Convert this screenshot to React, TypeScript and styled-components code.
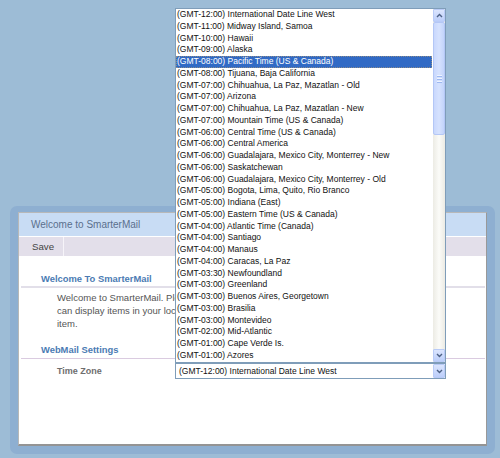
import styled, { createGlobalStyle } from 'styled-components';

const zones = [
  '(GMT-12:00) International Date Line West',
  '(GMT-11:00) Midway Island, Samoa',
  '(GMT-10:00) Hawaii',
  '(GMT-09:00) Alaska',
  '(GMT-08:00) Pacific Time (US & Canada)',
  '(GMT-08:00) Tijuana, Baja California',
  '(GMT-07:00) Chihuahua, La Paz, Mazatlan - Old',
  '(GMT-07:00) Arizona',
  '(GMT-07:00) Chihuahua, La Paz, Mazatlan - New',
  '(GMT-07:00) Mountain Time (US & Canada)',
  '(GMT-06:00) Central Time (US & Canada)',
  '(GMT-06:00) Central America',
  '(GMT-06:00) Guadalajara, Mexico City, Monterrey - New',
  '(GMT-06:00) Saskatchewan',
  '(GMT-06:00) Guadalajara, Mexico City, Monterrey - Old',
  '(GMT-05:00) Bogota, Lima, Quito, Rio Branco',
  '(GMT-05:00) Indiana (East)',
  '(GMT-05:00) Eastern Time (US & Canada)',
  '(GMT-04:00) Atlantic Time (Canada)',
  '(GMT-04:00) Santiago',
  '(GMT-04:00) Manaus',
  '(GMT-04:00) Caracas, La Paz',
  '(GMT-03:30) Newfoundland',
  '(GMT-03:00) Greenland',
  '(GMT-03:00) Buenos Aires, Georgetown',
  '(GMT-03:00) Brasilia',
  '(GMT-03:00) Montevideo',
  '(GMT-02:00) Mid-Atlantic',
  '(GMT-01:00) Cape Verde Is.',
  '(GMT-01:00) Azores',
];

const GlobalStyle = createGlobalStyle`
  html, body {
    margin: 0;
    padding: 0;
    background: #9dbcd6;
  }
  body {
    font-family: 'Liberation Sans', Arial, sans-serif;
  }
`;

const Page = styled.div`
  width: 500px;
  height: 458px;
  box-sizing: border-box;
  padding: 206px 5px 0 10px;
  background: #9dbcd6;
  overflow: hidden;
`;

const Frame = styled.div`
  width: 485px;
  height: 248px;
  box-sizing: border-box;
  padding: 6px 8px 8px 8px;
  background: #8eafd1;
  border-radius: 7px;
`;

const Panel = styled.div`
  height: 100%;
  box-sizing: border-box;
  background: #fff;
  border: 1px solid #b8b8b8;
  border-right-color: #999;
  border-bottom: 2px solid #949494;
  display: flex;
  flex-direction: column;
`;

const Header = styled.div`
  height: 23px;
  line-height: 23px;
  padding-left: 12px;
  background: #c8dcf4;
  border-bottom: 1px solid #fff;
  color: #5a6f8d;
  font-size: 10px;
`;

const Toolbar = styled.div`
  height: 19px;
  display: flex;
  background: #e3dfea;
`;

const ToolButton = styled.div`
  padding: 0 9px 0 13px;
  line-height: 19px;
  font-size: 9.7px;
  color: #444;
  border-right: 1px solid #f6f4f9;
`;

const Content = styled.div`
  padding: 0 1px 0 2px;
`;

const SectionTitle = styled.div<{ $top: number; $line: string; $weight: number }>`
  margin-top: ${(p) => p.$top}px;
  padding: 0 0 ${(p) => (p.$weight === 2 ? 1 : 2)}px 20px;
  line-height: 12px;
  font-size: 9.4px;
  font-weight: bold;
  color: #4b7bb3;
  border-bottom: ${(p) => p.$weight}px solid ${(p) => p.$line};
`;

const Paragraph = styled.div`
  margin-top: 3px;
  padding-left: 36px;
  font-size: 9.5px;
  line-height: 13px;
  color: #555;
  white-space: nowrap;
`;

const FieldRow = styled.div`
  margin-top: 4px;
  padding-left: 36px;
  height: 16px;
  display: flex;
  align-items: center;
`;

const Label = styled.div`
  width: 118px;
  font-size: 9px;
  font-weight: bold;
  color: #6e6e6e;
`;

const Select = styled.div`
  position: relative;
  width: 271px;
  height: 16px;
  box-sizing: border-box;
  border: 1px solid #7f9db9;
  background: #fff;
  display: flex;
  align-items: center;
`;

const SelectValue = styled.div`
  flex: 1;
  padding-left: 3px;
  font-size: 8.5px;
  color: #111;
  white-space: nowrap;
`;

const ArrowButton = styled.div`
  width: 12px;
  height: 14px;
  box-sizing: border-box;
  border: 1px solid #b9cbf7;
  border-radius: 1px;
  background: linear-gradient(to bottom, #dbe5fe, #bccefa);
  display: flex;
  align-items: center;
  justify-content: center;
`;

const ListBox = styled.div`
  position: absolute;
  left: -1px;
  bottom: calc(100% + 1px);
  width: 271px;
  height: 355px;
  box-sizing: border-box;
  border: 1px solid #7f9db9;
  background: #fff;
  display: flex;
`;

const Items = styled.div`
  width: 256px;
  margin-right: 1px;
`;

const Item = styled.div<{ $selected?: boolean }>`
  height: 11.76px;
  line-height: 11.76px;
  padding-left: 1px;
  font-size: 8.5px;
  white-space: nowrap;
  color: ${(p) => (p.$selected ? '#fff' : '#111')};
  background: ${(p) => (p.$selected ? '#316ac5' : 'transparent')};
  outline: ${(p) => (p.$selected ? '1px dotted #8a8a8a' : 'none')};
  outline-offset: -1px;
`;

const ScrollBar = styled.div`
  width: 12px;
  display: flex;
  flex-direction: column;
  background: linear-gradient(to right, #ecebe4, #fbfbf8 50%, #ecebe4);
`;

const Thumb = styled.div`
  height: 113px;
  box-sizing: border-box;
  border: 1px solid #b4c7f6;
  border-radius: 2px;
  background: linear-gradient(to right, #c9d8fd, #d6e2fe 50%, #c3d4fb);
  display: flex;
  flex-direction: column;
  align-items: center;
  justify-content: center;
  gap: 1px;
`;

const Grip = styled.div`
  width: 5px;
  height: 1px;
  background: #eef3ff;
  border-bottom: 1px solid #9db8f0;
`;

const Track = styled.div`
  flex: 1;
`;

function Chevron({ up }: { up?: boolean }) {
  return (
    <svg width="7" height="5" viewBox="0 0 7 5">
      <path
        d={up ? 'M1 4 L3.5 1.5 L6 4' : 'M1 1 L3.5 3.5 L6 1'}
        fill="none"
        stroke="#4d6185"
        strokeWidth="1.4"
      />
    </svg>
  );
}

export default function App() {
  return (
    <Page>
      <GlobalStyle />
      <Frame>
        <Panel>
          <Header>Welcome to SmarterMail</Header>
          <Toolbar>
            <ToolButton>Save</ToolButton>
          </Toolbar>
          <Content>
            <SectionTitle $top={17} $line="#e2dfe9" $weight={2}>
              Welcome To SmarterMail
            </SectionTitle>
            <Paragraph>
              Welcome to SmarterMail. Please choose your time zone so that SmarterMail
              <br />
              can display items in your local time. You can change it later in the settings
              <br />
              item.
            </Paragraph>
            <SectionTitle $top={14} $line="#dacbe0" $weight={1}>
              WebMail Settings
            </SectionTitle>
            <FieldRow>
              <Label>Time Zone</Label>
              <Select>
                <SelectValue>{zones[0]}</SelectValue>
                <ArrowButton>
                  <Chevron />
                </ArrowButton>
                <ListBox>
                  <Items>
                    {zones.map((z, i) => (
                      <Item key={z} $selected={i === 4}>
                        {z}
                      </Item>
                    ))}
                  </Items>
                  <ScrollBar>
                    <ArrowButton style={{ height: 13 }}>
                      <Chevron up />
                    </ArrowButton>
                    <Thumb>
                      <Grip />
                      <Grip />
                      <Grip />
                    </Thumb>
                    <Track />
                    <ArrowButton style={{ height: 13 }}>
                      <Chevron />
                    </ArrowButton>
                  </ScrollBar>
                </ListBox>
              </Select>
            </FieldRow>
          </Content>
        </Panel>
      </Frame>
    </Page>
  );
}
